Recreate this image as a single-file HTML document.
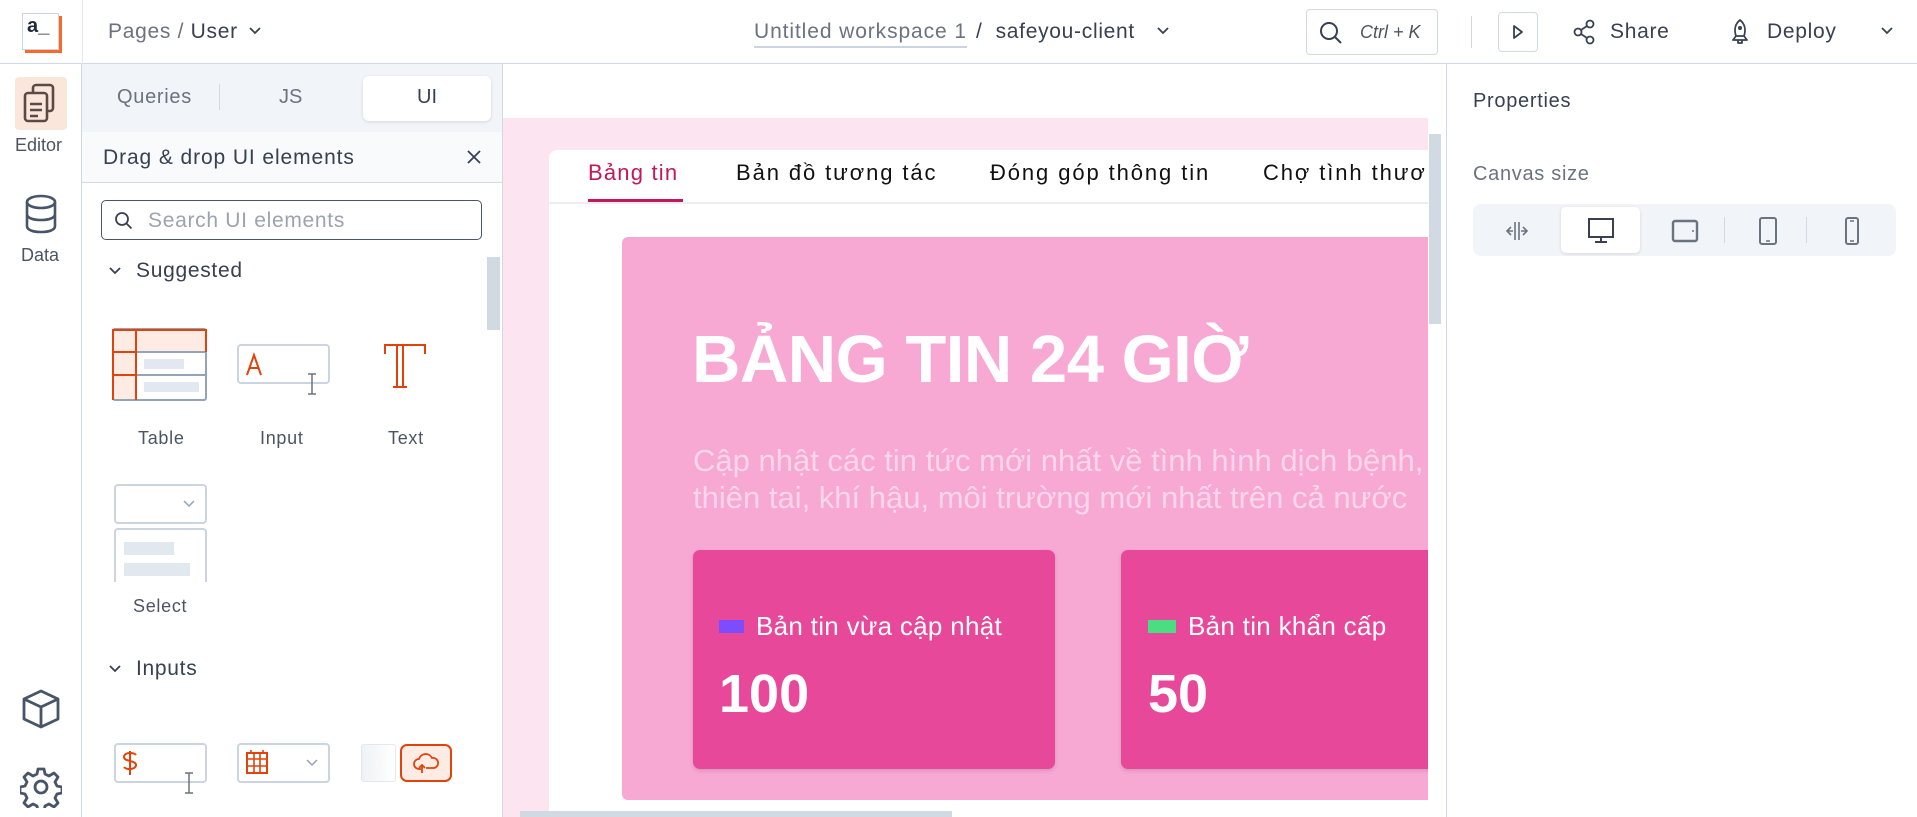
<!DOCTYPE html>
<html><head><meta charset="utf-8">
<style>
*{box-sizing:border-box;margin:0;padding:0}
body{width:1917px;height:817px;overflow:hidden;background:#fff;font-family:"Liberation Sans","Noto Sans CJK SC",sans-serif;position:relative;color:#4b5563}
.a{position:absolute}
.t{letter-spacing:0.7px;white-space:nowrap}
svg{display:block}
</style></head><body>
<!-- top bar -->
<div class="a" style="left:0;top:0;width:1917px;height:64px;border-bottom:1px solid #d1d9e3;background:#fff"></div>
<div class="a" style="left:82px;top:0;width:1px;height:64px;background:#e2e8f0"></div>
<div class="a" style="left:22px;top:13px;width:37px;height:37px;border:1px solid #cbd5e1;background:#fff;box-shadow:3px 3px 0 #f86a2b"></div>
<div class="a" style="left:27px;top:15px;font-size:20px;font-weight:bold;color:#1f2937">a_</div>
<div class="a t" style="left:108px;top:20px;font-size:21px;color:#6b7280">Pages / <span style="color:#374151">User</span></div>
<svg class="a" style="left:248px;top:26px" width="14" height="10"><path d="M2 2l5 5 5-5" stroke="#374151" stroke-width="1.8" fill="none"/></svg>
<div class="a t" style="left:754px;top:20px;font-size:21px;color:#6b7280;border-bottom:2px solid #cbd5e1;padding-bottom:2px;letter-spacing:0.9px">Untitled workspace 1</div>
<div class="a t" style="left:976px;top:20px;font-size:21px;color:#374151">/ &nbsp;safeyou-client</div>
<svg class="a" style="left:1156px;top:26px" width="14" height="10"><path d="M2 2l5 5 5-5" stroke="#374151" stroke-width="1.8" fill="none"/></svg>
<div class="a" style="left:1306px;top:9px;width:132px;height:46px;border:1px solid #d1d9e3;border-radius:4px"></div>
<svg class="a" style="left:1318px;top:20px" width="26" height="26"><circle cx="11" cy="11" r="8" stroke="#374151" stroke-width="2" fill="none"/><path d="M17 17l6 6" stroke="#374151" stroke-width="2"/></svg>
<div class="a" style="left:1360px;top:22px;font-size:18px;font-style:italic;color:#4b5563">Ctrl + K</div>
<div class="a" style="left:1471px;top:16px;width:1px;height:32px;background:#d1d9e3"></div>
<div class="a" style="left:1498px;top:12px;width:40px;height:40px;border:1px solid #d1d9e3;border-radius:4px"></div>
<svg class="a" style="left:1511px;top:24px" width="14" height="16"><path d="M3 2l8 6-8 6z" stroke="#374151" stroke-width="1.8" fill="none" stroke-linejoin="round"/></svg>
<svg class="a" style="left:1573px;top:19px" width="24" height="26"><circle cx="5" cy="13" r="3.5" stroke="#374151" stroke-width="1.8" fill="none"/><circle cx="17" cy="5" r="3.5" stroke="#374151" stroke-width="1.8" fill="none"/><circle cx="17" cy="21" r="3.5" stroke="#374151" stroke-width="1.8" fill="none"/><path d="M8 11l6-4M8 15l6 4" stroke="#374151" stroke-width="1.8"/></svg>
<div class="a t" style="left:1610px;top:20px;font-size:21px;color:#374151">Share</div>
<svg class="a" style="left:1729px;top:18px" width="22" height="28"><path d="M11 2c5 4 6 10 4 16H7C5 12 6 6 11 2zM7 18l-3 4h14l-3-4M9 22v3h4v-3" stroke="#374151" stroke-width="1.8" fill="none" stroke-linejoin="round"/><circle cx="11" cy="10" r="2" fill="#374151"/></svg>
<div class="a t" style="left:1767px;top:20px;font-size:21px;color:#374151">Deploy</div>
<svg class="a" style="left:1880px;top:26px" width="14" height="10"><path d="M2 2l5 5 5-5" stroke="#374151" stroke-width="1.8" fill="none"/></svg>

<!-- left rail -->
<div class="a" style="left:81px;top:64px;width:1px;height:753px;background:#d1d9e3"></div>
<div class="a" style="left:15px;top:77px;width:52px;height:53px;background:#fbe6dc;border-radius:4px"></div>
<svg class="a" style="left:20px;top:82px" width="42" height="44"><rect x="13" y="3" width="20" height="26" rx="3" stroke="#5b4a44" stroke-width="2.6" fill="none"/><rect x="5" y="11" width="22" height="28" rx="3" stroke="#5b4a44" stroke-width="2.6" fill="#fbe6dc"/><path d="M10 22h12M10 28h12M10 34h8" stroke="#5b4a44" stroke-width="2.6"/></svg>
<div class="a" style="left:15px;top:135px;font-size:18px;color:#4b5563">Editor</div>
<svg class="a" style="left:22px;top:194px" width="38" height="42"><ellipse cx="19" cy="8" rx="14" ry="6" stroke="#475569" stroke-width="2.6" fill="none"/><path d="M5 8v24c0 4 6 6 14 6s14-2 14-6V8M5 20c0 4 6 6 14 6s14-2 14-6" stroke="#475569" stroke-width="2.6" fill="none"/></svg>
<div class="a" style="left:21px;top:245px;font-size:18px;color:#4b5563">Data</div>
<svg class="a" style="left:20px;top:688px" width="42" height="42"><path d="M21 3l17 8v20l-17 8-17-8V11z M4 11l17 8 17-8 M21 19v20" stroke="#475569" stroke-width="2.8" fill="none" stroke-linejoin="round"/></svg>
<svg class="a" style="left:20px;top:766px" width="42" height="42"><path d="M18 3h6l1 5 4 2 5-3 4 4-3 5 2 4 5 1v6l-5 1-2 4 3 5-4 4-5-3-4 2-1 5h-6l-1-5-4-2-5 3-4-4 3-5-2-4-5-1v-6l5-1 2-4-3-5 4-4 5 3 4-2z" stroke="#475569" stroke-width="2.8" fill="none" stroke-linejoin="round"/><circle cx="21" cy="21" r="6" stroke="#475569" stroke-width="2.8" fill="none"/></svg>

<!-- panel -->
<div class="a" style="left:82px;top:64px;width:420px;height:119px;background:#f1f4f8"></div>
<div class="a" style="left:82px;top:132px;width:420px;height:51px;background:#f8fafc;border-bottom:1px solid #d1d9e3"></div>
<div class="a t" style="left:117px;top:86px;font-size:20px;color:#6b7280">Queries</div>
<div class="a" style="left:219px;top:84px;width:1px;height:26px;background:#d1d9e3"></div>
<div class="a" style="left:279px;top:86px;font-size:20px;color:#6b7280">JS</div>
<div class="a" style="left:363px;top:76px;width:128px;height:45px;background:#fff;border-radius:6px;box-shadow:0 1px 3px rgba(0,0,0,.12)"></div>
<div class="a" style="left:417px;top:86px;font-size:20px;color:#374151">UI</div>
<div class="a t" style="left:103px;top:146px;font-size:21px;color:#374151;letter-spacing:0.9px">Drag &amp; drop UI elements</div>
<svg class="a" style="left:467px;top:150px" width="14" height="14"><path d="M1 1l12 12M13 1L1 13" stroke="#374151" stroke-width="1.8"/></svg>
<div class="a" style="left:101px;top:200px;width:381px;height:40px;border:1.5px solid #4b5563;border-radius:5px"></div>
<svg class="a" style="left:114px;top:211px" width="20" height="20"><circle cx="8" cy="8" r="6" stroke="#374151" stroke-width="1.8" fill="none"/><path d="M12.5 12.5l5 5" stroke="#374151" stroke-width="1.8"/></svg>
<div class="a t" style="left:148px;top:209px;font-size:21px;color:#9ca3af">Search UI elements</div>
<div class="a" style="left:487px;top:257px;width:13px;height:73px;background:#d1d9e3"></div>
<svg class="a" style="left:108px;top:266px" width="14" height="10"><path d="M2 2l5 5 5-5" stroke="#374151" stroke-width="1.8" fill="none"/></svg>
<div class="a t" style="left:136px;top:259px;font-size:21px;color:#374151">Suggested</div>

<!-- table icon -->
<svg class="a" style="left:112px;top:328px" width="96" height="74"><rect x="1" y="1" width="93" height="23" fill="#feece4"/><rect x="1" y="24" width="23" height="47" fill="#feece4"/><rect x="1" y="1" width="93" height="71" rx="2" stroke="#94a3b8" stroke-width="2" fill="none"/><path d="M24 24h70M24 47h70" stroke="#94a3b8" stroke-width="2"/><path d="M1 72V2h93v22M1 24h23M1 47h23M24 1v71" stroke="#e0440c" stroke-width="2" fill="none"/><rect x="32" y="31" width="40" height="10" fill="#e2e8f0"/><rect x="32" y="54" width="55" height="10" fill="#e2e8f0"/></svg>
<div class="a t" style="left:138px;top:428px;font-size:18px;color:#4b5563">Table</div>
<svg class="a" style="left:237px;top:344px" width="94" height="52"><rect x="1" y="1" width="91" height="38" rx="3" stroke="#cbd5e1" stroke-width="2" fill="#fff"/><path d="M10 31l7-20 7 20M13 24h9" stroke="#e0440c" stroke-width="2" fill="none"/><path d="M75 30v20M71 30h8M71 50h8" stroke="#6b7280" stroke-width="1.5"/></svg>
<div class="a t" style="left:260px;top:428px;font-size:18px;color:#4b5563">Input</div>
<svg class="a" style="left:383px;top:342px" width="44" height="46"><path d="M2 12V3h40v9M14 3v42M20 3v42M10 45h14" stroke="#e0440c" stroke-width="2" fill="none"/></svg>
<div class="a t" style="left:388px;top:428px;font-size:18px;color:#4b5563">Text</div>
<svg class="a" style="left:114px;top:484px" width="94" height="100"><rect x="1" y="1" width="91" height="38" rx="3" stroke="#cbd5e1" stroke-width="2" fill="#fff"/><path d="M70 17l5 5 5-5" stroke="#94a3b8" stroke-width="1.5" fill="none"/><path d="M1 98V48a3 3 0 013-3h85a3 3 0 013 3v50" stroke="#cbd5e1" stroke-width="2" fill="none"/><rect x="10" y="58" width="50" height="13" fill="#e2e8f0"/><rect x="10" y="79" width="66" height="13" fill="#e2e8f0"/></svg>
<div class="a t" style="left:133px;top:596px;font-size:18px;color:#4b5563">Select</div>
<svg class="a" style="left:108px;top:664px" width="14" height="10"><path d="M2 2l5 5 5-5" stroke="#374151" stroke-width="1.8" fill="none"/></svg>
<div class="a t" style="left:136px;top:657px;font-size:21px;color:#374151">Inputs</div>
<svg class="a" style="left:114px;top:743px" width="94" height="52"><rect x="1" y="1" width="91" height="38" rx="3" stroke="#cbd5e1" stroke-width="2" fill="#fff"/><path d="M22 12c-2-3-12-3-12 2s12 3 12 8-10 5-12 2M16 8v24" stroke="#e0440c" stroke-width="2" fill="none"/><path d="M75 30v20M71 30h8M71 50h8" stroke="#6b7280" stroke-width="1.5"/></svg>
<svg class="a" style="left:237px;top:743px" width="94" height="42"><rect x="1" y="1" width="91" height="38" rx="3" stroke="#cbd5e1" stroke-width="2" fill="#fff"/><rect x="10" y="10" width="20" height="20" stroke="#e0440c" stroke-width="2" fill="none"/><path d="M10 16h20M10 23h20M17 10v20M23 10v20M14 7v4M26 7v4" stroke="#e0440c" stroke-width="1.6"/><path d="M70 17l5 5 5-5" stroke="#94a3b8" stroke-width="1.5" fill="none"/></svg>
<div class="a" style="left:361px;top:744px;width:35px;height:38px;border:1px solid #e2e8f0;border-radius:3px;background:linear-gradient(90deg,#eef2f6,#fff)"></div>
<div class="a" style="left:400px;top:744px;width:52px;height:38px;border:2px solid #e0440c;border-radius:7px;background:#feece4"></div>
<svg class="a" style="left:412px;top:751px" width="30" height="24"><path d="M9 18H7a5 5 0 010-10 7 7 0 0113-1 5 5 0 012 10h-8" stroke="#e0440c" stroke-width="1.8" fill="none"/><path d="M10 22v-8M7 17l3-3 3 3" stroke="#e0440c" stroke-width="1.8" fill="none"/></svg>

<!-- canvas -->
<div class="a" style="left:502px;top:64px;width:1px;height:753px;background:#d1d9e3"></div>
<div class="a" style="left:503px;top:118px;width:925px;height:699px;background:#fce4f0"></div>
<div class="a" style="left:549px;top:150px;width:879px;height:667px;background:#fff;border-radius:8px 0 0 0"></div>
<div class="a" style="left:549px;top:202px;width:879px;height:2px;background:#eceef0"></div>
<div class="a" style="left:588px;top:160px;font-size:22px;color:#c2185b;letter-spacing:1.2px">Bảng tin</div>
<div class="a" style="left:588px;top:199px;width:95px;height:3px;background:#c2185b"></div>
<div class="a" style="left:736px;top:160px;font-size:22px;color:#111;letter-spacing:1.9px;white-space:nowrap">Bản đồ tương tác</div>
<div class="a" style="left:990px;top:160px;font-size:22px;color:#111;letter-spacing:1.9px;white-space:nowrap">Đóng góp thông tin</div>
<div class="a" style="left:1263px;top:160px;width:165px;overflow:hidden;font-size:22px;color:#111;letter-spacing:1.9px;white-space:nowrap">Chợ tình thương</div>
<div class="a" style="left:622px;top:237px;width:806px;height:563px;background:#f7a8d3;border-radius:6px 0 0 6px;overflow:hidden">
  <div class="a" style="left:70px;top:84px;font-size:67px;font-weight:bold;color:#fff;white-space:nowrap;letter-spacing:-0.5px">BẢNG TIN 24 GIỜ</div>
  <div class="a" style="left:71px;top:205px;font-size:31px;line-height:37px;color:#fcd6ea;white-space:nowrap">Cập nhật các tin tức mới nhất về tình hình dịch bệnh,<br>thiên tai, khí hậu, môi trường mới nhất trên cả nước</div>
  <div class="a" style="left:71px;top:313px;width:362px;height:219px;background:#e8489a;border-radius:7px;box-shadow:0 2px 4px rgba(0,0,0,.12)">
    <div class="a" style="left:26px;top:70px;width:25px;height:13px;background:#7c4dff"></div>
    <div class="a" style="left:63px;top:61px;font-size:26px;color:#fff;white-space:nowrap;letter-spacing:0.3px">Bản tin vừa cập nhật</div>
    <div class="a" style="left:26px;top:113px;font-size:54px;font-weight:bold;color:#fff">100</div>
  </div>
  <div class="a" style="left:499px;top:313px;width:362px;height:219px;background:#e8489a;border-radius:7px;box-shadow:0 2px 4px rgba(0,0,0,.12)">
    <div class="a" style="left:27px;top:70px;width:28px;height:13px;background:#4ade80"></div>
    <div class="a" style="left:67px;top:61px;font-size:26px;color:#fff;white-space:nowrap;letter-spacing:0.3px">Bản tin khẩn cấp</div>
    <div class="a" style="left:27px;top:113px;font-size:54px;font-weight:bold;color:#fff">50</div>
  </div>
</div>
<div class="a" style="left:1428px;top:118px;width:16px;height:699px;background:#fff"></div>
<div class="a" style="left:1429px;top:134px;width:12px;height:190px;background:#d1d9e3"></div>
<div class="a" style="left:520px;top:811px;width:432px;height:6px;background:#d1d9e3"></div>
<div class="a" style="left:1446px;top:64px;width:1px;height:753px;background:#d1d9e3"></div>

<!-- right panel -->
<div class="a t" style="left:1473px;top:90px;font-size:20px;color:#374151">Properties</div>
<div class="a t" style="left:1473px;top:163px;font-size:20px;color:#6b7280">Canvas size</div>
<div class="a" style="left:1473px;top:204px;width:423px;height:52px;background:#f1f4f8;border-radius:8px"></div>
<div class="a" style="left:1561px;top:207px;width:79px;height:46px;background:#fff;border-radius:5px;box-shadow:0 1px 3px rgba(0,0,0,.12)"></div>
<svg class="a" style="left:1503px;top:219px" width="28" height="24"><path d="M12 3v18M16 3v18M8 8l-4 4 4 4M4 12h6M20 8l4 4-4 4M18 12h6" stroke="#6b7280" stroke-width="1.6" fill="none"/></svg>
<svg class="a" style="left:1586px;top:217px" width="30" height="28"><rect x="3" y="2" width="24" height="18" stroke="#374151" stroke-width="2" fill="none"/><path d="M15 20v5M9 25h12" stroke="#374151" stroke-width="2"/></svg>
<svg class="a" style="left:1670px;top:218px" width="30" height="26"><rect x="3" y="3" width="24" height="20" rx="2" stroke="#6b7280" stroke-width="2.4" fill="none"/><circle cx="23" cy="13" r="1" fill="#6b7280"/></svg>
<div class="a" style="left:1724px;top:217px;width:1px;height:26px;background:#d1d9e3"></div>
<svg class="a" style="left:1757px;top:216px" width="22" height="30"><rect x="3" y="2" width="16" height="26" rx="2" stroke="#6b7280" stroke-width="2" fill="none"/><path d="M9 25h4" stroke="#6b7280" stroke-width="1.5"/></svg>
<div class="a" style="left:1806px;top:217px;width:1px;height:26px;background:#d1d9e3"></div>
<svg class="a" style="left:1843px;top:216px" width="18" height="30"><rect x="3" y="2" width="12" height="26" rx="2" stroke="#6b7280" stroke-width="2" fill="none"/><path d="M7 5h4M7 25h4" stroke="#6b7280" stroke-width="1.5"/></svg>
</body></html>
